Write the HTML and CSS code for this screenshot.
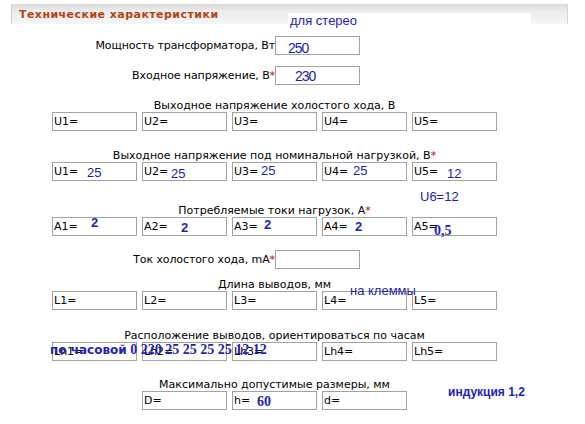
FILE: index.html
```html
<!DOCTYPE html>
<html lang="ru">
<head>
<meta charset="utf-8">
<title>Технические характеристики</title>
<link rel="stylesheet" href="styles.css">
</head>
<body>
<div class="page">
  <div class="title-bar"><h2 class="title">Технические характеристики</h2></div>
  <div class="form">
    <div class="pair pair-power"><span class="label">Мощность трансформатора, Вт</span><span class="field"></span></div>
    <div class="pair pair-input"><span class="label">Входное напряжение, В<span class="req">*</span></span><span class="field"></span></div>

    <div class="group group-idle">
      <div class="group-title">Выходное напряжение холостого хода, В</div>
      <div class="fields"><span class="field">U1=</span><span class="field">U2=</span><span class="field">U3=</span><span class="field">U4=</span><span class="field">U5=</span></div>
    </div>

    <div class="group group-load">
      <div class="group-title">Выходное напряжение под номинальной нагрузкой, В<span class="req">*</span></div>
      <div class="fields"><span class="field">U1=</span><span class="field">U2=</span><span class="field">U3=</span><span class="field">U4=</span><span class="field">U5=</span></div>
    </div>

    <div class="group group-current">
      <div class="group-title">Потребляемые токи нагрузок, А<span class="req">*</span></div>
      <div class="fields"><span class="field">A1=</span><span class="field">A2=</span><span class="field">A3=</span><span class="field">A4=</span><span class="field">A5=</span></div>
    </div>

    <div class="pair pair-idle-current"><span class="label">Ток холостого хода, mA<span class="req">*</span></span><span class="field"></span></div>

    <div class="group group-length">
      <div class="group-title">Длина выводов, мм</div>
      <div class="fields"><span class="field">L1=</span><span class="field">L2=</span><span class="field">L3=</span><span class="field">L4=</span><span class="field">L5=</span></div>
    </div>

    <div class="group group-clock">
      <div class="group-title">Расположение выводов, ориентироваться по часам</div>
      <div class="fields"><span class="field">Lh1=</span><span class="field">Lh2=</span><span class="field">Lh3=</span><span class="field">Lh4=</span><span class="field">Lh5=</span></div>
    </div>

    <div class="group group-size">
      <div class="group-title">Максимально допустимые размеры, мм</div>
      <div class="fields"><span class="field">D=</span><span class="field">h=</span><span class="field">d=</span></div>
    </div>
  </div>

  <div class="note note-stereo">для стерео</div>
  <div class="note note-250">250</div>
  <div class="note note-230">230</div>
  <div class="note num note-u1">25</div>
  <div class="note num note-u2">25</div>
  <div class="note num note-u3">25</div>
  <div class="note num note-u4">25</div>
  <div class="note num note-u5">12</div>
  <div class="note num note-u6">U6=12</div>
  <div class="note bold note-a1">2</div>
  <div class="note bold note-a2">2</div>
  <div class="note bold note-a3">2</div>
  <div class="note bold note-a4">2</div>
  <div class="note serif note-a5">0,5</div>
  <div class="note num note-terminals">на клеммы</div>
  <div class="note note-clock"><span class="clock-word">по часовой</span><span class="clock-digits"> 0 220 25 25 25 25 12 12</span></div>
  <div class="note serif note-h">60</div>
  <div class="note bold note-induction">индукция 1,2</div>
</div>
</body>
</html>
```

FILE: styles.css
```css
html, body {
  margin: 0;
  padding: 0;
  background: #ffffff;
}

.page {
  position: relative;
  width: 585px;
  height: 424px;
  padding-top: 4px;
  box-sizing: border-box;
  font-family: "DejaVu Sans", Verdana, sans-serif;
  font-size: 11px;
  color: #000000;
  overflow: hidden;
}

.title-bar {
  margin-left: 11px;
  width: 557px;
  height: 20px;
  box-sizing: border-box;
  border-left: 1px solid #cdcdcd;
  border-right: 1px solid #d6d6d6;
  background: linear-gradient(to bottom, #dadada 0%, #ececec 35%, #f6f6f6 100%);
}

.title {
  margin: 0;
  padding-left: 7px;
  font-family: "DejaVu Sans", Verdana, sans-serif;
  font-size: 11px;
  font-weight: bold;
  line-height: 21px;
  color: #b4440f;
  letter-spacing: 0.45px;
}

.form {
  margin-left: 52px;
  width: 445px;
}

.pair {
  display: grid;
  grid-template-columns: 223px 85px;
  align-items: center;
}

.pair .label {
  text-align: right;
  white-space: nowrap;
  letter-spacing: -0.1px;
}

.pair-power { margin-top: 12px; }
.pair-input { margin-top: 11px; }
.pair-idle-current { margin-top: 14px; }

.req {
  color: #cc0000;
}

.group-title {
  text-align: center;
  line-height: 12px;
  white-space: nowrap;
}

.fields {
  display: flex;
  justify-content: center;
  gap: 5px;
}

.group-idle { margin-top: 15px; }
.group-load { margin-top: 19px; }
.group-current { margin-top: 24px; }
.group-length { margin-top: 10px; }
.group-clock { margin-top: 20px; }
.group-size { margin-top: 18px; }

.field {
  display: block;
  box-sizing: border-box;
  width: 85px;
  height: 19px;
  border: 1px solid #a2a2a2;
  padding-left: 1px;
  line-height: 17px;
  font-family: "DejaVu Sans", Verdana, sans-serif;
  font-size: 11px;
  white-space: nowrap;
  overflow: hidden;
  background: #ffffff;
}

/* hand-written annotations over the form */
.note {
  position: absolute;
  font-family: "Liberation Sans", Arial, sans-serif;
  font-size: 13px;
  line-height: 16px;
  color: #1c1ca8;
  white-space: nowrap;
}

.note.bold {
  font-weight: bold;
  color: #2222b4;
}

.note.serif {
  font-family: "Liberation Serif", "Times New Roman", serif;
  font-size: 14px;
  font-weight: bold;
  color: #2222b4;
}

.note-stereo {
  left: 288px;
  top: 13px;
  width: 241px;
  padding-left: 2px;
  background: #ffffff;
}

.note-250 { left: 288px; top: 40px; font-size: 14px; letter-spacing: -1px; }
.note-230 { left: 295px; top: 68px; font-size: 14px; letter-spacing: -1px; }

.note-u1 { left: 87px; top: 165px; }
.note-u2 { left: 171px; top: 166px; }
.note-u3 { left: 261px; top: 163px; }
.note-u4 { left: 353px; top: 163px; }
.note-u5 { left: 447px; top: 166px; }
.note-u6 { left: 420px; top: 189px; }

.note-a1 { left: 91px; top: 215px; }
.note-a2 { left: 181px; top: 220px; }
.note-a3 { left: 264px; top: 217px; }
.note-a4 { left: 355px; top: 219px; }
.note-a5 { left: 434px; top: 223px; }

.note-terminals { left: 350px; top: 283px; }

.note-clock {
  left: 50px;
  top: 342px;
  color: #2222b4;
  font-weight: bold;
}

.clock-word {
  font-family: "DejaVu Sans", Verdana, sans-serif;
  font-size: 12px;
}

.clock-digits {
  font-family: "Liberation Serif", "Times New Roman", serif;
  font-size: 14px;
}

.note-h { left: 257px; top: 394px; }

.note-induction {
  left: 448px;
  top: 384px;
  font-size: 12px;
}
```
